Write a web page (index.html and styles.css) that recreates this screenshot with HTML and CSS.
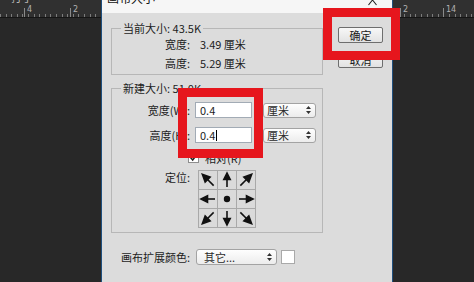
FILE: index.html
```html
<!DOCTYPE html>
<html lang="zh-CN">
<head>
<meta charset="utf-8">
<title>画布大小</title>
<link rel="stylesheet" href="styles.css">
</head>
<body>
<div class="screen">
  <div class="side side-left">
    <div class="ruler">
      <div class="tabstrip"><span class="tabtext">打了</span><span class="tabtext star">*</span></div>
      <span class="mark mark-l1"></span><span class="num num-l1">4</span>
      <span class="mark mark-l2"></span><span class="num num-l2">2</span>
      <div class="ticks"></div>
    </div>
  </div>

  <div class="dialog">
    <div class="titlebar">
      <span class="title">画布大小</span>
      <svg class="close" width="9" height="6" viewBox="0 0 9 6"><path d="M0.5 -4 L4.5 0 L8.5 -4 M4.5 0 L0.5 5 M4.5 0 L8.5 5" fill="none" stroke="#222" stroke-width="1.1"/></svg>
    </div>
    <div class="body">
      <div class="main">
        <fieldset class="group g1">
          <legend>当前大小: 43.5K</legend>
          <div class="kv"><span class="lbl">宽度:</span><span class="val">3.49 厘米</span></div>
          <div class="kv"><span class="lbl">高度:</span><span class="val">5.29 厘米</span></div>
        </fieldset>

        <fieldset class="group g2">
          <legend>新建大小: 51.0K</legend>
          <div class="field">
            <span class="lbl">宽度(W):</span>
            <span class="input">0.4</span>
            <span class="select unit">厘米<svg class="updown" width="5" height="8" viewBox="0 0 5 8"><path d="M2.5 0 L5 3 L0 3Z M0 5 L5 5 L2.5 8Z" fill="#333"/></svg></span>
          </div>
          <div class="field">
            <span class="lbl">高度(H):</span>
            <span class="input">0.4<span class="caret"></span></span>
            <span class="select unit">厘米<svg class="updown" width="5" height="8" viewBox="0 0 5 8"><path d="M2.5 0 L5 3 L0 3Z M0 5 L5 5 L2.5 8Z" fill="#333"/></svg></span>
          </div>
          <div class="check-row">
            <span class="checkbox"><svg width="9" height="9" viewBox="0 0 9 9"><path d="M1.5 4.5 L3.7 7 L7.8 1.5" fill="none" stroke="#222" stroke-width="1.5"/></svg></span>
            <span class="check-label">相对(R)</span>
          </div>
          <div class="anchor-row">
            <span class="lbl">定位:</span>
            <div class="anchor">
              <span class="cell"><svg viewBox="0 0 18 18"><g transform="rotate(-45 9 9)"><path d="M9 17V8"/><polygon points="9,1 5.5,8.5 12.5,8.5"/></g></svg></span>
              <span class="cell"><svg viewBox="0 0 18 18"><path d="M9 16V8"/><polygon points="9,2 5.8,8.5 12.2,8.5"/></svg></span>
              <span class="cell"><svg viewBox="0 0 18 18"><g transform="rotate(45 9 9)"><path d="M9 17V8"/><polygon points="9,1 5.5,8.5 12.5,8.5"/></g></svg></span>
              <span class="cell"><svg viewBox="0 0 18 18"><g transform="rotate(-90 9 9)"><path d="M9 16V8"/><polygon points="9,2 5.8,8.5 12.2,8.5"/></g></svg></span>
              <span class="cell"><svg viewBox="0 0 18 18"><circle cx="9" cy="9" r="2.4"/></svg></span>
              <span class="cell"><svg viewBox="0 0 18 18"><g transform="rotate(90 9 9)"><path d="M9 16V8"/><polygon points="9,2 5.8,8.5 12.2,8.5"/></g></svg></span>
              <span class="cell"><svg viewBox="0 0 18 18"><g transform="rotate(-135 9 9)"><path d="M9 17V8"/><polygon points="9,1 5.5,8.5 12.5,8.5"/></g></svg></span>
              <span class="cell"><svg viewBox="0 0 18 18"><g transform="rotate(180 9 9)"><path d="M9 16V8"/><polygon points="9,2 5.8,8.5 12.2,8.5"/></g></svg></span>
              <span class="cell"><svg viewBox="0 0 18 18"><g transform="rotate(135 9 9)"><path d="M9 17V8"/><polygon points="9,1 5.5,8.5 12.5,8.5"/></g></svg></span>
            </div>
          </div>
        </fieldset>

        <div class="ext-row">
          <span class="lbl">画布扩展颜色:</span>
          <span class="select ext">其它...<svg class="updown" width="5" height="8" viewBox="0 0 5 8"><path d="M2.5 0 L5 3 L0 3Z M0 5 L5 5 L2.5 8Z" fill="#333"/></svg></span>
          <span class="swatch"></span>
        </div>
      </div>

      <div class="buttons">
        <button class="btn">确定</button>
        <button class="btn">取消</button>
      </div>
    </div>
  </div>

  <div class="side side-right">
    <div class="ruler">
      <div class="tabstrip"></div>
      <span class="mark mark-r1"></span><span class="num num-r1">2</span>
      <span class="mark mark-r2"></span><span class="num num-r2">14</span>
      <div class="ticks"></div>
    </div>
  </div>

  <div class="highlight hl-ok"></div>
  <div class="highlight hl-inputs"></div>
</div>
</body>
</html>
```

FILE: styles.css
```css
* { box-sizing: border-box; }
html, body { margin: 0; padding: 0; }
body {
  width: 474px;
  height: 282px;
  overflow: hidden;
  background: #282828;
  font-family: "Noto Sans CJK SC", "Noto Sans", sans-serif;
  font-size: 11px;
  color: #1c1c1c;
}

.screen {
  position: relative;
  display: flex;
  width: 474px;
  height: 282px;
}

/* dark canvas areas with rulers */
.side { flex: none; height: 282px; background: #282828; }
.side-left { width: 101px; }
.side-right { width: 81px; }

.ruler {
  position: relative;
  height: 18px;
  background: #303030;
  border-bottom: 1px solid #151515;
  display: flex;
  flex-direction: column;
  justify-content: space-between;
  overflow: hidden;
}
.tabstrip {
  height: 5px;
  overflow: hidden;
  display: flex;
  gap: 6px;
  padding-left: 11px;
}
.tabtext {
  font-size: 11px;
  line-height: 11px;
  margin-top: -8px;
  color: #b8b8b8;
}
.ticks {
  height: 3px;
  background: repeating-linear-gradient(90deg, #7c7c7c 0 1px, transparent 1px 5.6px);
}
.mark {
  position: absolute;
  bottom: 0;
  width: 1px;
  height: 9px;
  background: #8a8a8a;
}
.num {
  position: absolute;
  top: 5px;
  font-family: "DejaVu Sans", sans-serif;
  font-size: 8px;
  line-height: 9px;
  color: #b0b0b0;
}
.mark-l1 { left: 24px; }
.num-l1 { left: 27px; }
.mark-l2 { left: 70px; }
.num-l2 { left: 73px; }
.mark-r1 { left: 7px; }
.num-r1 { left: 10px; }
.mark-r2 { left: 50px; }
.num-r2 { left: 53px; }

/* dialog */
.dialog {
  flex: none;
  width: 292px;
  height: 282px;
  background: #dcdcdc;
  border-left: 1px solid #1f4f7e;
  border-right: 1px solid #1f4f7e;
  display: flex;
  flex-direction: column;
}
.titlebar {
  flex: none;
  height: 13px;
  background: #f6f6f6;
  overflow: hidden;
  display: flex;
  justify-content: space-between;
  padding: 0 15px 0 5px;
}
.title {
  font-size: 12px;
  line-height: 12px;
  margin-top: -8px;
  color: #111;
}
.close { display: block; }

.body {
  display: flex;
  gap: 15px;
  padding: 9px 8px 0 9px;
}
.main { flex: none; width: 212px; }

.group {
  margin: 0;
  min-width: 0;
  border: 1px solid #b7b7b7;
}
.group legend {
  margin-left: 9px;
  padding: 0 2px;
  font-size: 11px;
  line-height: 12px;
}
.g1 { padding: 1px 0 2px; }
.g2 { margin-top: 7px; padding: 8px 0 4px; }

.lbl {
  flex: none;
  width: 78px;
  text-align: right;
  line-height: 14px;
  white-space: nowrap;
}

.kv {
  display: flex;
  align-items: center;
  height: 18px;
  margin-bottom: 1px;
}
.kv:last-child { margin-bottom: 0; }
.kv .val { margin-left: 10px; line-height: 14px; }

.field {
  display: flex;
  align-items: center;
  height: 16px;
  margin-bottom: 9px;
}
.input {
  margin-left: 5px;
  width: 57px;
  height: 16px;
  background: #fff;
  border: 1px solid #a2abb5;
  padding-left: 4px;
  line-height: 14px;
  display: flex;
  align-items: center;
}
.caret {
  width: 1px;
  height: 11px;
  background: #000;
  margin-left: 1px;
}
.select {
  display: flex;
  align-items: center;
  justify-content: space-between;
  height: 15px;
  border: 1px solid #a3a3a3;
  border-radius: 3px;
  background: linear-gradient(#fefefe, #ececec);
  line-height: 13px;
  color: #2a2a2a;
}
.unit { margin-left: 11px; width: 53px; padding: 0 4px 0 3px; }
.updown { display: block; flex: none; }

.check-row {
  display: flex;
  align-items: center;
  height: 11px;
  margin-left: 76px;
  margin-bottom: 7px;
}
.checkbox {
  width: 11px;
  height: 11px;
  background: #fff;
  border: 1px solid #8d8d8d;
  display: flex;
  align-items: center;
  justify-content: center;
}
.checkbox svg { display: block; }
.check-label { margin-left: 6px; line-height: 12px; }

.anchor-row {
  display: flex;
  align-items: flex-start;
}
.anchor-row .lbl { margin-top: 0; }
.anchor {
  margin-left: 8px;
  display: grid;
  grid-template-columns: repeat(3, 18px);
  grid-template-rows: repeat(3, 18px);
  gap: 1px;
  padding: 1px;
  background: #a9a9a9;
}
.cell {
  background: #dadada;
  display: block;
}
.cell svg {
  display: block;
  width: 18px;
  height: 18px;
  stroke: #111;
  stroke-width: 1.6;
  fill: #111;
}

.ext-row {
  display: flex;
  align-items: center;
  margin-top: 16px;
  height: 16px;
}
.ext-row .lbl { width: 79px; }
.ext {
  margin-left: 6px;
  width: 81px;
  height: 16px;
  padding: 0 4px 0 7px;
}
.swatch {
  margin-left: 4px;
  width: 14px;
  height: 14px;
  background: #fff;
  border: 1px solid #a9a9a9;
}

.buttons {
  flex: none;
  width: 45px;
  display: flex;
  flex-direction: column;
  gap: 9px;
  padding-top: 5px;
}
.btn {
  width: 45px;
  height: 16px;
  padding: 0;
  border: 1px solid #6e6e6e;
  border-radius: 2px;
  background: linear-gradient(#f7f7f7, #e2e2e2);
  font-family: "Noto Sans CJK SC", sans-serif;
  font-size: 11px;
  line-height: 14px;
  color: #1a1a1a;
}

/* red annotation boxes over the screenshot */
.highlight {
  position: absolute;
  border: 9px solid #e6161d;
}
.hl-ok { left: 323px; top: 8px; width: 77px; height: 52px; }
.hl-inputs { left: 178px; top: 88px; width: 85px; height: 70px; }
```
